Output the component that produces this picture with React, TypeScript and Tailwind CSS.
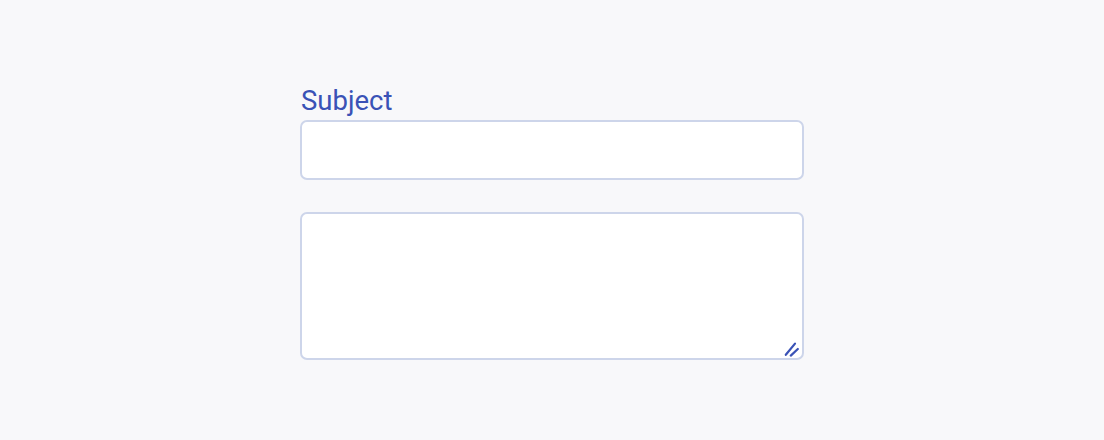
import React from "react";

export default function App() {
  return (
    <div className="w-[1104px] h-[440px] bg-[#f8f8fa] flex justify-center" style={{ fontFamily: "Roboto, sans-serif" }}>
      <div className="w-[504px] pt-[82px] flex flex-col">
        <label className="text-[27.5px] leading-[38px] text-[#3a52b6] pl-px">Subject</label>
        <input className="h-[60px] w-full bg-white border-2 border-[#cdd5ea] rounded-[7px] outline-none px-3 text-lg" />
        <div className="relative mt-[32px]">
          <textarea className="block h-[148px] w-full bg-white border-2 border-[#cdd5ea] rounded-[7px] outline-none resize-none p-3 text-lg" />
          <svg className="absolute right-[4px] bottom-[3px]" width="16" height="16" viewBox="0 0 16 16">
            <line x1="1.8" y1="13.8" x2="11" y2="2.6" stroke="#3a52b6" strokeWidth="2.2" strokeLinecap="round" />
            <line x1="6.8" y1="14.6" x2="13.8" y2="8" stroke="#3a52b6" strokeWidth="2.2" strokeLinecap="round" />
          </svg>
        </div>
      </div>
    </div>
  );
}
